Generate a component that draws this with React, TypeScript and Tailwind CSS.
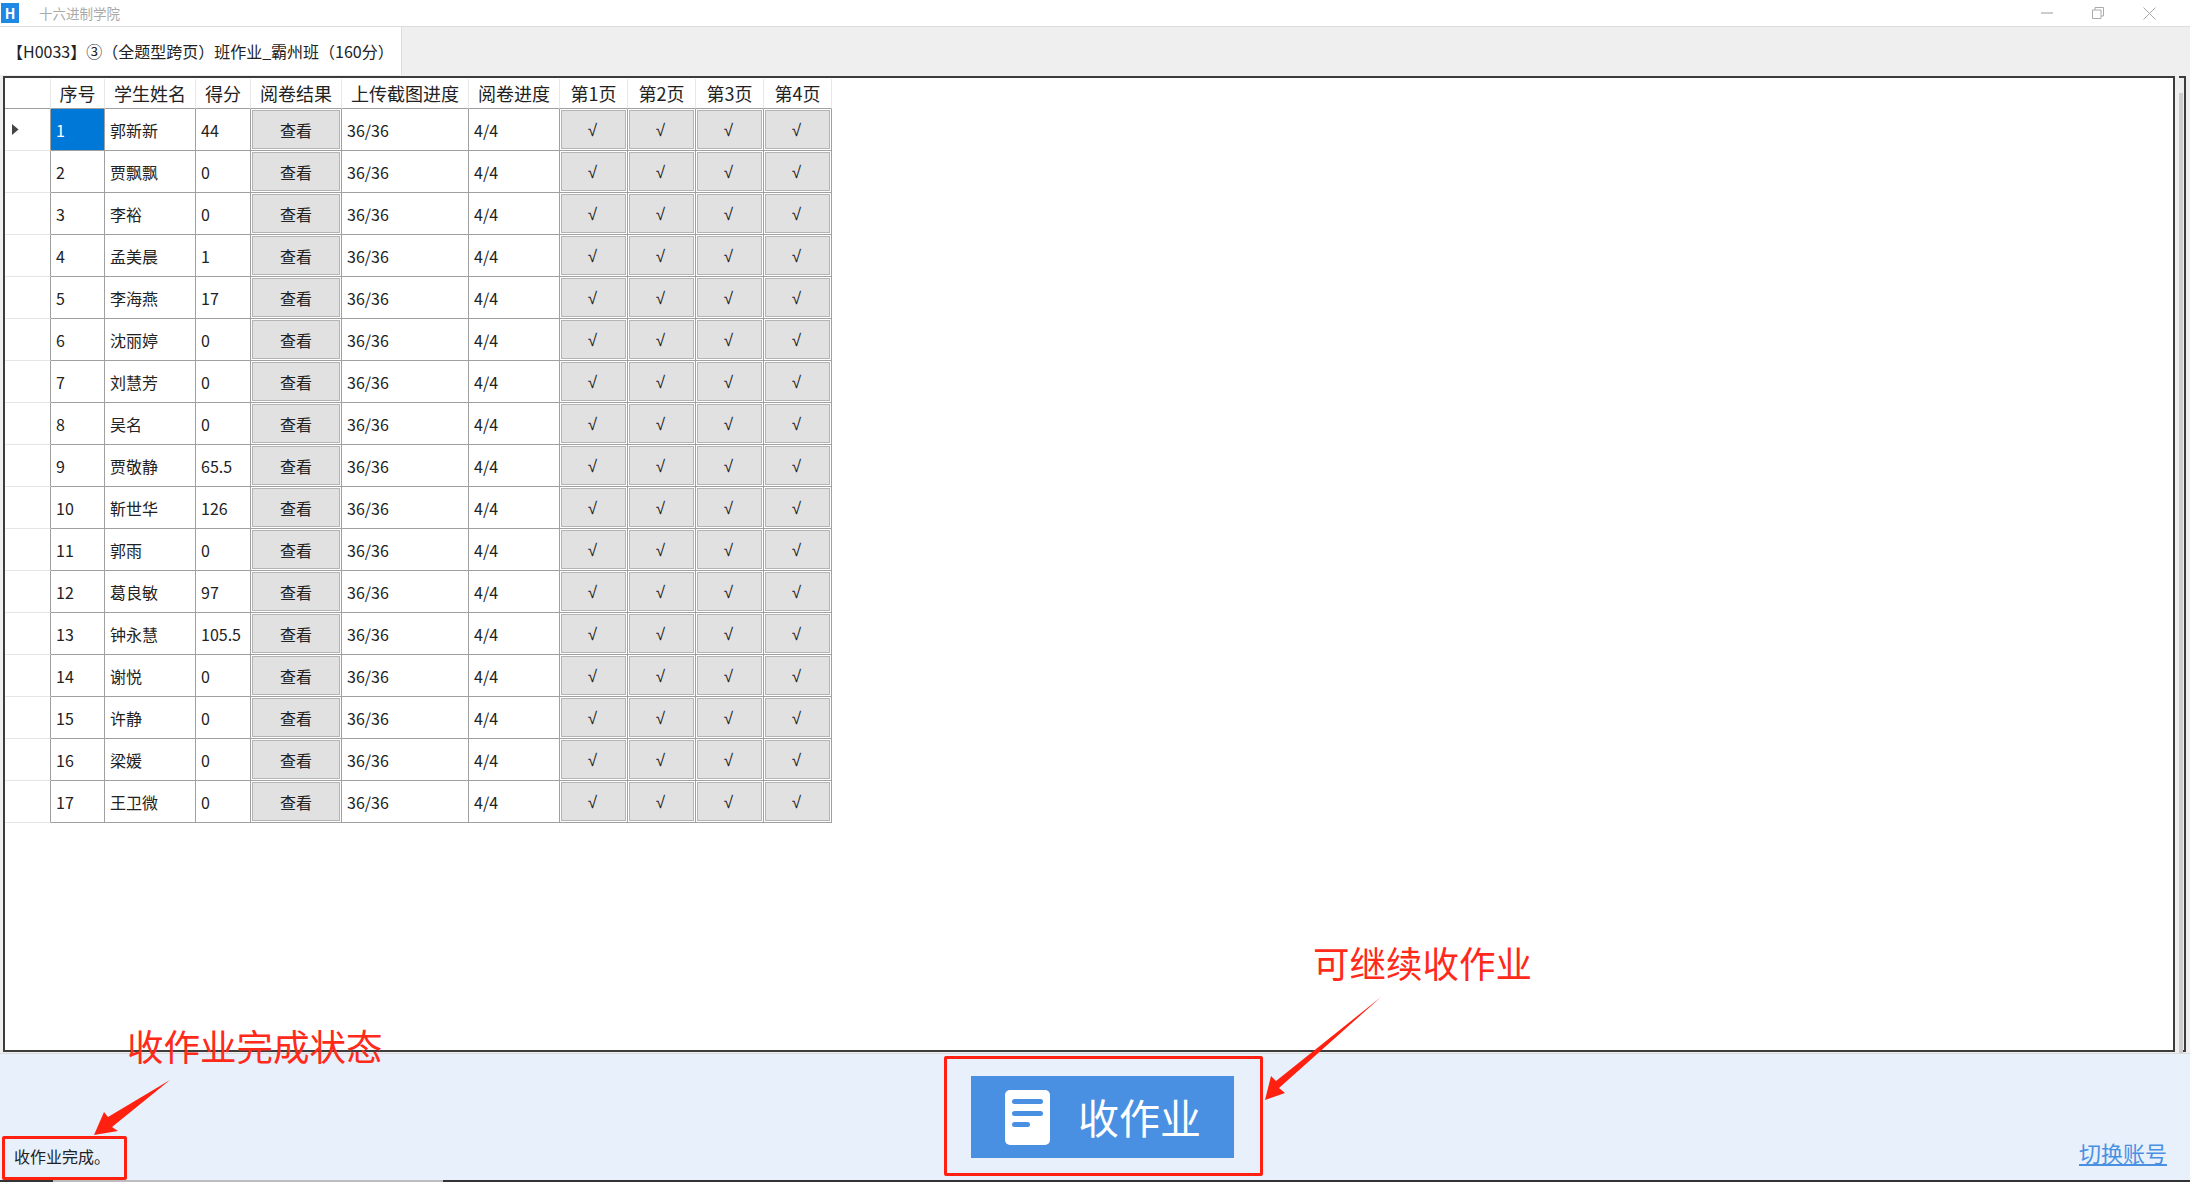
const FONT = "font-['Noto_Sans_CJK_SC','Noto_Sans',sans-serif]";

const students: [string, string][] = [
  ["郭新新", "44"],
  ["贾飘飘", "0"],
  ["李裕", "0"],
  ["孟美晨", "1"],
  ["李海燕", "17"],
  ["沈丽婷", "0"],
  ["刘慧芳", "0"],
  ["吴名", "0"],
  ["贾敬静", "65.5"],
  ["靳世华", "126"],
  ["郭雨", "0"],
  ["葛良敏", "97"],
  ["钟永慧", "105.5"],
  ["谢悦", "0"],
  ["许静", "0"],
  ["梁媛", "0"],
  ["王卫微", "0"],
];

const headers: [string, string][] = [
  ["序号", "w-[54px]"],
  ["学生姓名", "w-[91px]"],
  ["得分", "w-[55px]"],
  ["阅卷结果", "w-[91px]"],
  ["上传截图进度", "w-[127px]"],
  ["阅卷进度", "w-[91px]"],
  ["第1页", "w-[68px]"],
  ["第2页", "w-[68px]"],
  ["第3页", "w-[68px]"],
  ["第4页", "w-[68px]"],
];

function CellButton({ label, width, check }: { label: string; width: string; check?: boolean }) {
  return (
    <div className={`${width} h-full shrink-0 border-r border-b border-[#a0a0a0] p-[1px]`}>
      <div
        className={`flex h-full w-full items-center justify-center border border-[#b4b4b4] bg-[#e1e1e1] text-[#222] ${
          check ? "pt-[3px] pr-[2px] font-['Liberation_Sans',sans-serif] text-[17px]" : "text-[16px]"
        }`}
      >
        {label}
      </div>
    </div>
  );
}

function TextCell({ text, width, selected }: { text: string; width: string; selected?: boolean }) {
  return (
    <div
      className={`${width} flex h-full shrink-0 items-center border-r border-b border-[#a0a0a0] pl-[5px] text-[16px] ${
        selected ? "bg-[#0078d7] text-white" : "bg-white text-[#222]"
      }`}
    >
      {text}
    </div>
  );
}

function Row({ index, name, score }: { index: number; name: string; score: string }) {
  return (
    <div className="flex h-[42px]">
      <div className="flex h-full w-[46px] shrink-0 items-center border-r border-b border-r-[#a0a0a0] border-b-[#e6e6e6] bg-white pl-[7px]">
        {index === 1 && (
          <svg width="7" height="11" viewBox="0 0 7 11">
            <path d="M0 0 L6.5 5.5 L0 11 Z" fill="#444" />
          </svg>
        )}
      </div>
      <TextCell text={String(index)} width="w-[54px]" selected={index === 1} />
      <TextCell text={name} width="w-[91px]" />
      <TextCell text={score} width="w-[55px]" />
      <CellButton label="查看" width="w-[91px]" />
      <TextCell text="36/36" width="w-[127px]" />
      <TextCell text="4/4" width="w-[91px]" />
      <CellButton label="√" width="w-[68px]" check />
      <CellButton label="√" width="w-[68px]" check />
      <CellButton label="√" width="w-[68px]" check />
      <CellButton label="√" width="w-[68px]" check />
    </div>
  );
}

function DocIcon() {
  return (
    <svg width="45" height="55" viewBox="0 0 45 55">
      <rect width="45" height="55" rx="5" fill="#fff" />
      <rect x="7" y="9" width="31" height="5" rx="2.5" fill="#4a90e2" />
      <rect x="7" y="21" width="31" height="5" rx="2.5" fill="#4a90e2" />
      <rect x="7" y="32" width="18" height="5" rx="2.5" fill="#4a90e2" />
    </svg>
  );
}

export default function App() {
  return (
    <div className={`${FONT} relative flex h-[1182px] w-[2190px] flex-col overflow-hidden bg-white`}>
      {/* title bar */}
      <div className="flex h-[26px] shrink-0 items-center bg-white">
        <div className="ml-[1px] flex h-[20px] w-[18px] items-center justify-center bg-[#1e88e5] text-[14px] leading-none font-bold text-white">
          H
        </div>
        <span className="ml-[20px] text-[13.5px] text-[#aaaaaa]">十六进制学院</span>
        <div className="ml-auto flex items-center gap-[39px] pr-[34px]">
          <svg width="12" height="12" viewBox="0 0 12 12">
            <path d="M0 6 H12" stroke="#aaa" strokeWidth="1.2" />
          </svg>
          <svg width="12" height="12" viewBox="0 0 12 12" fill="none">
            <path d="M0.5 3 H9 V11.5 H0.5 Z M3 3 V0.5 H11.5 V9 H9" stroke="#aaa" />
          </svg>
          <svg width="13" height="13" viewBox="0 0 13 13">
            <path d="M0.5 0.5 L12.5 12.5 M12.5 0.5 L0.5 12.5" stroke="#aaa" />
          </svg>
        </div>
      </div>

      {/* tab strip */}
      <div className="flex h-[49px] shrink-0 border-t border-[#dcdcdc] bg-[#efefef]">
        <div className="flex w-[402px] items-center border-r border-[#dcdcdc] bg-white pb-[1px] pl-[7px] text-[16px] whitespace-nowrap text-[#222]">
          【H0033】③（全题型跨页）班作业_霸州班（160分）
        </div>
      </div>

      {/* grid panel + scrollbar */}
      <div className="flex h-[978px] shrink-0 bg-[#efefef] pt-[1px] pb-[1px] pl-[3px]">
        <div className="h-full w-[2172px] shrink-0 border-2 border-t-[2px] border-[#3c3c3c] bg-white pt-[1px]">
          <div className="flex h-[30px]">
            <div className="h-full w-[46px] shrink-0 border-r border-b border-r-[#e8e8e8] border-b-[#a0a0a0]" />
            {headers.map(([label, width]) => (
              <div
                key={label}
                className={`${width} flex h-full shrink-0 items-center justify-center border-r border-b border-r-[#e8e8e8] border-b-[#a0a0a0] text-[18px] whitespace-nowrap text-[#222]`}
              >
                {label}
              </div>
            ))}
          </div>
          {students.map(([name, score], i) => (
            <Row key={i} index={i + 1} name={name} score={score} />
          ))}
        </div>
        <div className="ml-[4px] h-full w-[7px] shrink-0 border-t-2 border-r-2 border-b-2 border-[#3c3c3c] bg-[#eeeeee]">
          <div className="mt-[15px] h-[960px] w-[4px] bg-[#cdcdcd]" />
        </div>
      </div>

      {/* footer */}
      <div className="flex h-[127px] shrink-0 items-stretch border-t border-[#dcdcdc] bg-[#e8f0fb]">
        <div className="flex w-[971px] shrink-0 items-end pb-[12px] pl-[14px] text-[16px] text-[#222]">
          收作业完成。
        </div>
        <div className="mt-[22px] flex h-[82px] w-[263px] shrink-0 items-center bg-[#4a90e2] pl-[34px] text-white">
          <DocIcon />
          <span className="ml-[28px] pb-[2px] text-[41px] leading-none">收作业</span>
        </div>
        <div className="ml-auto flex items-end pr-[23px] pb-[14px]">
          <span className="text-[22px] leading-[28px] text-[#4a90e2] underline">切换账号</span>
        </div>
      </div>
      <div className="flex h-[2px] shrink-0">
        <div className="w-[53px] bg-[#333333]" />
        <div className="w-[390px] bg-[#bdbdbd]" />
        <div className="flex-1 bg-[#333333]" />
      </div>

      {/* annotations */}
      <span className="absolute top-[1021px] left-[127px] text-[36.5px] leading-[50px] whitespace-nowrap text-[#ff2a1a]">
        收作业完成状态
      </span>
      <span className="absolute top-[938px] left-[1313px] text-[36.5px] leading-[50px] whitespace-nowrap text-[#ff2a1a]">
        可继续收作业
      </span>
      <div className="absolute top-[1136px] left-[2px] h-[44px] w-[125px] rounded-[2px] border-[3px] border-[#ff2010]" />
      <div className="absolute top-[1056px] left-[944px] h-[120px] w-[319px] rounded-[2px] border-[3px] border-[#ff2010]" />
      <svg className="pointer-events-none absolute top-0 left-0" width="2190" height="1182" viewBox="0 0 2190 1182">
        <polygon points="170,1080 112,1127 118,1131 94,1135 104,1112 108,1117" fill="#ff2010" />
        <polygon points="1381,997 1279,1088 1285,1093 1265,1100 1271,1076 1276,1081" fill="#ff2010" />
      </svg>
    </div>
  );
}
